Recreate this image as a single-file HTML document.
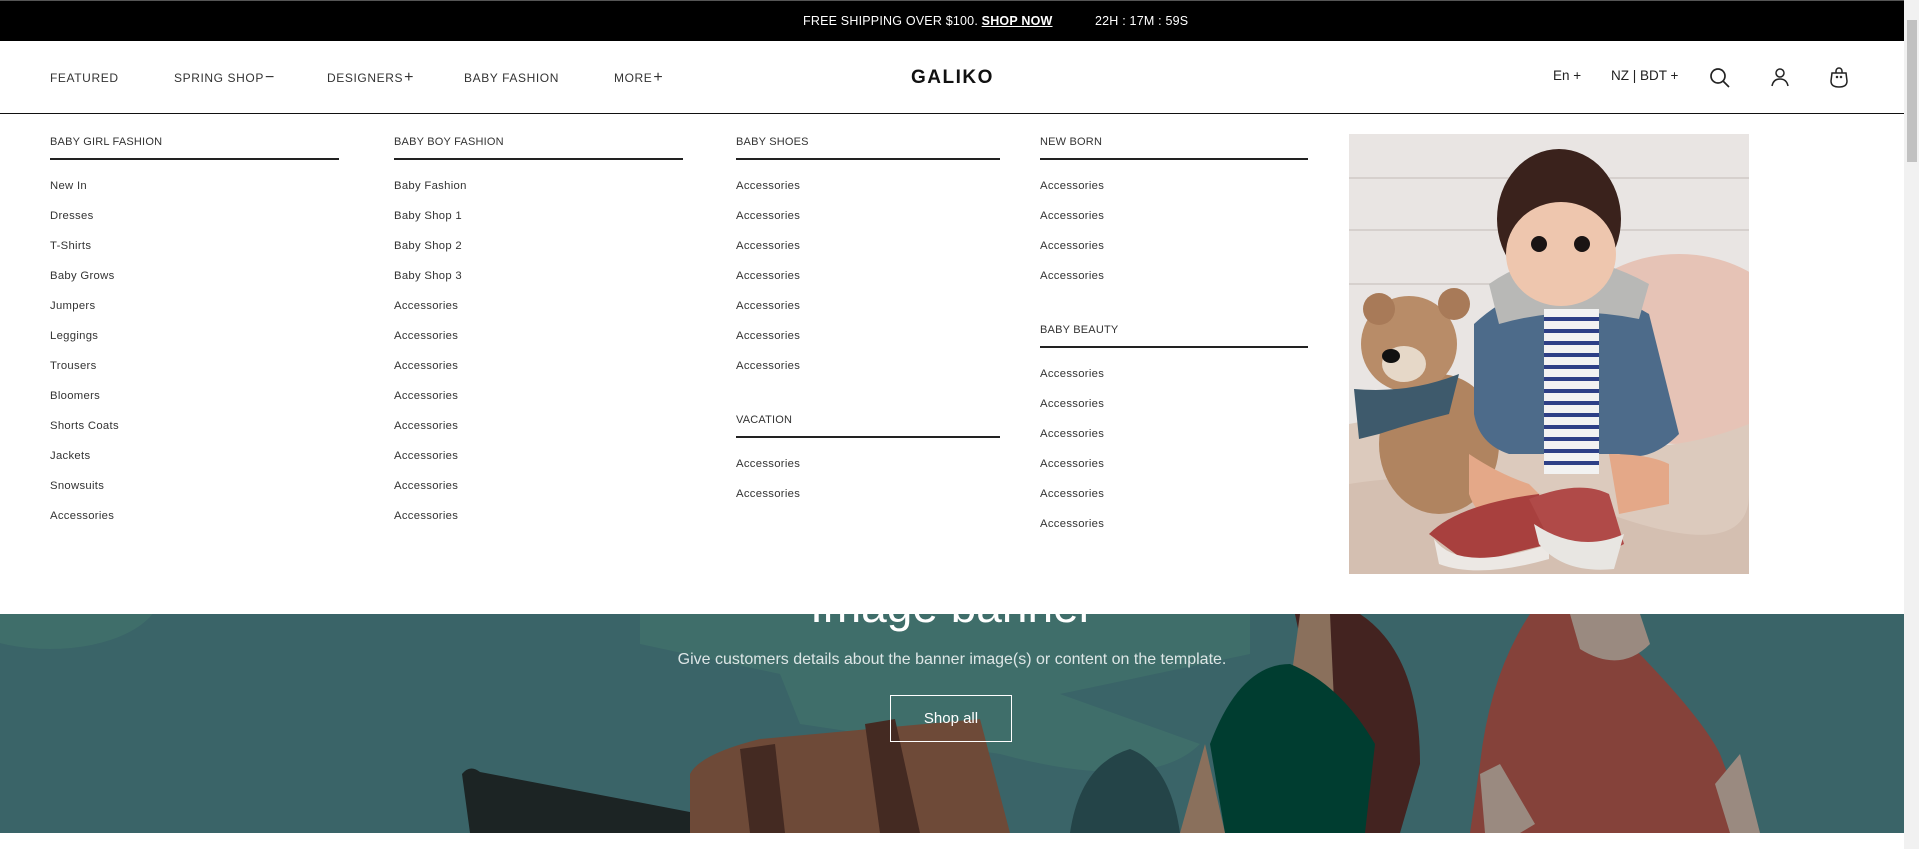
<!DOCTYPE html>
<html><head><meta charset="utf-8">
<style>
*{margin:0;padding:0;box-sizing:border-box}
html,body{width:1919px;height:849px;overflow:hidden;background:#fff;font-family:"Liberation Sans",sans-serif;color:#222}
.top{position:absolute;left:0;top:0;width:1904px;height:41px;background:#000;border-top:1px solid #555;color:#fff;font-size:12.5px;letter-spacing:.2px}
.top span{position:absolute;top:13px}
.hdr{position:absolute;left:0;top:41px;width:1904px;height:73px;border-bottom:1.5px solid #111}
.nav{position:absolute;top:30px;font-size:12px;letter-spacing:.6px;color:#333;line-height:14px;white-space:nowrap}
.nav i{font-style:normal;font-size:16px;line-height:14px;position:relative;top:0px;margin-left:1px}
.logo{position:absolute;left:911px;top:26px;font-size:19px;font-weight:bold;letter-spacing:1.5px;color:#111}
.r{position:absolute;top:27px;font-size:13.5px;color:#222}
.h{position:absolute;font-size:11px;letter-spacing:.2px;color:#333;white-space:nowrap}
.ln{position:absolute;height:1.5px;background:#222}
.it{position:absolute;font-size:11.3px;letter-spacing:.3px;color:#333;white-space:nowrap}
.ban{position:absolute;left:0;top:614px;width:1904px;height:219px;background:#3a6468;overflow:hidden}
.sb{position:absolute;left:1904px;top:0;width:15px;height:849px;background:#f1f1f1}
.sb div{position:absolute;left:3px;top:20px;width:10px;height:142px;background:#c1c1c1}
</style></head><body>
<div class="top">
<span style="left:803px">FREE SHIPPING OVER $100. <b style="text-decoration:underline">SHOP NOW</b></span>
<span style="left:1095px">22H : 17M : 59S</span>
</div>
<div class="hdr">
<div class="nav" style="left:50px">FEATURED</div>
<div class="nav" style="left:174px">SPRING SHOP<i>−</i></div>
<div class="nav" style="left:327px">DESIGNERS<i>+</i></div>
<div class="nav" style="left:464px">BABY FASHION</div>
<div class="nav" style="left:614px">MORE<i>+</i></div>
<div class="logo">GALIKO</div>
<div class="r" style="left:1553px">En +</div>
<div class="r" style="left:1611px">NZ | BDT +</div>
<svg style="position:absolute;left:1708px;top:25px" width="24" height="24" viewBox="0 0 24 24" fill="none" stroke="#222" stroke-width="1.7"><circle cx="10" cy="10" r="7"/><path d="M15 15l6 6"/></svg>
<svg style="position:absolute;left:1769px;top:25px" width="22" height="22" viewBox="0 0 22 22" fill="none" stroke="#222" stroke-width="1.5"><circle cx="11" cy="7" r="4"/><path d="M3 20c1-5 4-7 8-7s7 2 8 7"/></svg>
<svg style="position:absolute;left:1828px;top:24px" width="22" height="24" viewBox="0 0 22 24" fill="none" stroke="#222" stroke-width="1.5"><path d="M4 8h14l1 8c0 4-3 6-8 6s-8-2-8-6z"/><path d="M8 8V6a3 3 0 0 1 6 0v2"/><circle cx="9" cy="12" r=".5"/><circle cx="13" cy="12" r=".5"/></svg>
</div>

<div class="h" style="left:50px;top:136px">BABY GIRL FASHION</div>
<div class="ln" style="left:50px;top:158px;width:289px"></div>
<div class="h" style="left:394px;top:136px">BABY BOY FASHION</div>
<div class="ln" style="left:394px;top:158px;width:289px"></div>
<div class="h" style="left:736px;top:136px">BABY SHOES</div>
<div class="ln" style="left:736px;top:158px;width:264px"></div>
<div class="h" style="left:736px;top:414px">VACATION</div>
<div class="ln" style="left:736px;top:436px;width:264px"></div>
<div class="h" style="left:1040px;top:136px">NEW BORN</div>
<div class="ln" style="left:1040px;top:158px;width:268px"></div>
<div class="h" style="left:1040px;top:324px">BABY BEAUTY</div>
<div class="ln" style="left:1040px;top:346px;width:268px"></div>

<div class="it" style="left:50px;top:180px">New In</div>
<div class="it" style="left:50px;top:210px">Dresses</div>
<div class="it" style="left:50px;top:240px">T-Shirts</div>
<div class="it" style="left:50px;top:270px">Baby Grows</div>
<div class="it" style="left:50px;top:300px">Jumpers</div>
<div class="it" style="left:50px;top:330px">Leggings</div>
<div class="it" style="left:50px;top:360px">Trousers</div>
<div class="it" style="left:50px;top:390px">Bloomers</div>
<div class="it" style="left:50px;top:420px">Shorts Coats</div>
<div class="it" style="left:50px;top:450px">Jackets</div>
<div class="it" style="left:50px;top:480px">Snowsuits</div>
<div class="it" style="left:50px;top:510px">Accessories</div>

<div class="it" style="left:394px;top:180px">Baby Fashion</div>
<div class="it" style="left:394px;top:210px">Baby Shop 1</div>
<div class="it" style="left:394px;top:240px">Baby Shop 2</div>
<div class="it" style="left:394px;top:270px">Baby Shop 3</div>
<div class="it" style="left:394px;top:300px">Accessories</div>
<div class="it" style="left:394px;top:330px">Accessories</div>
<div class="it" style="left:394px;top:360px">Accessories</div>
<div class="it" style="left:394px;top:390px">Accessories</div>
<div class="it" style="left:394px;top:420px">Accessories</div>
<div class="it" style="left:394px;top:450px">Accessories</div>
<div class="it" style="left:394px;top:480px">Accessories</div>
<div class="it" style="left:394px;top:510px">Accessories</div>

<div class="it" style="left:736px;top:180px">Accessories</div>
<div class="it" style="left:736px;top:210px">Accessories</div>
<div class="it" style="left:736px;top:240px">Accessories</div>
<div class="it" style="left:736px;top:270px">Accessories</div>
<div class="it" style="left:736px;top:300px">Accessories</div>
<div class="it" style="left:736px;top:330px">Accessories</div>
<div class="it" style="left:736px;top:360px">Accessories</div>
<div class="it" style="left:736px;top:458px">Accessories</div>
<div class="it" style="left:736px;top:488px">Accessories</div>

<div class="it" style="left:1040px;top:180px">Accessories</div>
<div class="it" style="left:1040px;top:210px">Accessories</div>
<div class="it" style="left:1040px;top:240px">Accessories</div>
<div class="it" style="left:1040px;top:270px">Accessories</div>
<div class="it" style="left:1040px;top:368px">Accessories</div>
<div class="it" style="left:1040px;top:398px">Accessories</div>
<div class="it" style="left:1040px;top:428px">Accessories</div>
<div class="it" style="left:1040px;top:458px">Accessories</div>
<div class="it" style="left:1040px;top:488px">Accessories</div>
<div class="it" style="left:1040px;top:518px">Accessories</div>

<svg style="position:absolute;left:1349px;top:134px" width="400" height="440" viewBox="0 0 400 440">
<rect width="400" height="440" fill="#e9e5e3"/>
<g stroke="#d0cac6" stroke-width="1.5"><path d="M0 44H400M0 96H400M0 150H400"/></g>
<ellipse cx="330" cy="215" rx="120" ry="95" fill="#e6c3b6"/>
<path d="M0 290 Q100 270 200 300 T400 290 V440H0Z" fill="#dccabd"/>
<path d="M0 350 Q120 330 260 380 T400 360 V440H0Z" fill="#d4bfb1"/>
<ellipse cx="90" cy="310" rx="60" ry="70" fill="#b08460"/>
<circle cx="60" cy="210" r="48" fill="#b88c68"/>
<circle cx="30" cy="175" r="16" fill="#a87a58"/>
<circle cx="105" cy="170" r="16" fill="#a87a58"/>
<ellipse cx="55" cy="230" rx="22" ry="18" fill="#e6d8c8"/>
<ellipse cx="42" cy="222" rx="9" ry="7" fill="#111"/>
<path d="M5 255 Q60 260 110 240 L100 280 Q60 290 30 300 L10 305Z" fill="#3e5a6c"/>
<path d="M125 190 Q200 120 300 180 L330 300 Q300 330 270 320 L160 320 Q130 310 125 280Z" fill="#4d6b8a"/>
<path d="M140 150 Q210 100 300 150 L290 185 Q220 170 150 190Z" fill="#b8b8b6"/>
<rect x="195" y="175" width="55" height="165" fill="#f2f2f2"/>
<g stroke="#2d3f86" stroke-width="4"><path d="M195 185H250M195 197H250M195 209H250M195 221H250M195 233H250M195 245H250M195 257H250M195 269H250M195 281H250M195 293H250M195 305H250M195 317H250M195 329H250"/></g>
<ellipse cx="210" cy="85" rx="62" ry="70" fill="#3a221c"/>
<ellipse cx="212" cy="120" rx="55" ry="52" fill="#eec6ae"/>
<circle cx="190" cy="110" r="8" fill="#1a1414"/><circle cx="233" cy="110" r="8" fill="#1a1414"/>
<path d="M120 320 Q150 340 180 350 L200 370 L170 400 Q130 390 120 360Z" fill="#e4a888"/>
<path d="M260 320 Q300 320 320 330 L320 370 L270 380Z" fill="#e4a888"/>
<path d="M80 400 Q110 370 190 360 L200 410 Q160 420 120 430Z" fill="#a8403e"/>
<path d="M85 405 Q110 440 200 410 L200 425 Q130 445 90 430Z" fill="#ece8e4"/>
<path d="M180 365 Q230 345 260 360 L275 410 Q240 430 205 415Z" fill="#b04a48"/>
<path d="M185 390 Q230 420 275 400 L265 435 Q215 440 190 410Z" fill="#e8e6e2"/>
</svg>

<div class="ban">
<svg style="position:absolute;left:0;top:0" width="1904" height="219" viewBox="0 0 1904 219">
<ellipse cx="50" cy="-20" rx="110" ry="55" fill="#3f6e6a"/>
<path d="M640 0 L1250 0 L1250 40 L1060 80 L1200 130 Q1150 180 1000 140 L800 110 L780 60 L640 30Z" fill="#3f6e6a"/>
<path d="M462 160 Q470 150 480 158 L800 219 L470 219Z" fill="#1c2424"/>
<path d="M690 160 Q700 140 760 125 L980 105 L1010 219 L690 219Z" fill="#6e4a38"/>
<path d="M740 135 L775 130 L785 219 L750 219Z" fill="#442a22"/>
<path d="M865 110 L895 105 L920 219 L880 219Z" fill="#442a22"/>
<path d="M1070 219 Q1080 150 1130 135 Q1170 150 1180 219Z" fill="#244448"/>
<path d="M1295 0 L1360 0 Q1420 40 1420 150 L1400 219 L1340 219Z" fill="#432320"/>
<path d="M1300 0 L1330 0 L1340 219 L1270 219Z" fill="#8a705c"/>
<path d="M1210 130 Q1240 50 1290 50 Q1340 70 1375 130 L1365 219 L1225 219Z" fill="#003d30"/>
<path d="M1205 130 L1225 219 L1180 219Z" fill="#8a705c"/>
<path d="M1530 0 Q1590 -20 1620 20 Q1700 100 1720 140 L1750 219 L1470 219 L1480 150 Q1490 60 1530 0Z" fill="#85423a"/>
<path d="M1570 0 L1640 0 L1650 30 Q1620 60 1580 35Z" fill="#9a8a80"/>
<path d="M1480 160 L1500 150 L1535 210 L1520 219 L1485 219Z" fill="#9a8a80"/>
<path d="M1740 140 L1760 219 L1730 219 L1715 170Z" fill="#9a8a80"/>
</svg>
<div style="position:absolute;left:0;width:1904px;top:-36px;text-align:center;color:#fff;font-size:46px;line-height:56px">Image banner</div>
<div style="position:absolute;left:0;width:1904px;top:37px;text-align:center;color:#dde6e6;font-size:16px">Give customers details about the banner image(s) or content on the template.</div>
<div style="position:absolute;left:890px;top:81px;width:122px;height:47px;border:1px solid #fff;color:#fff;font-size:15px;text-align:center;line-height:45px">Shop all</div>
</div>
<div style="position:absolute;left:0;top:833px;width:1904px;height:16px;background:#fff"></div>
<div class="sb"><div></div></div>
</body></html>
